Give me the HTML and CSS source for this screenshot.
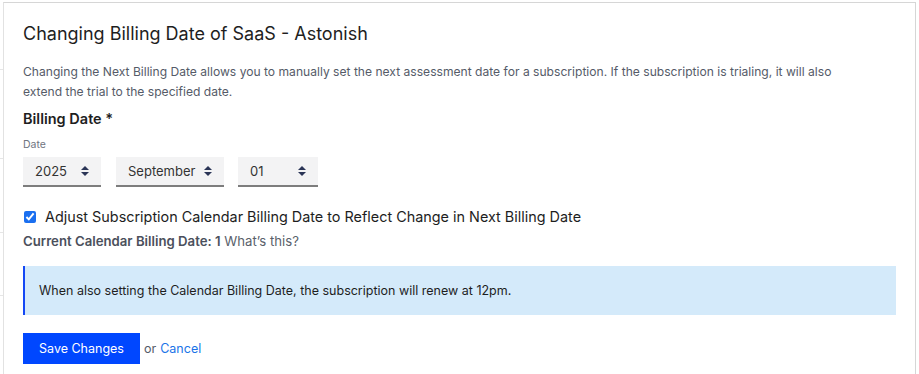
FILE: index.html
```html
<!DOCTYPE html>
<html>

<head>
    <meta charset="UTF-8">
    <title>Changing Billing Date</title>
    <link rel="stylesheet" href="styles.css">
</head>

<body>
    <div class="backdrop">
        <div class="modal">
            <h1 class="modal-title">Changing Billing Date of SaaS - Astonish</h1>

            <p class="modal-description">Changing the Next Billing Date allows you to manually set the next assessment date for a subscription. If the subscription is trialing, it will also extend the trial to the specified date.</p>

            <div class="field-label">Billing Date *</div>
            <div class="field-sublabel">Date</div>

            <div class="date-selects">
                <div class="select select-year">
                    <span>2025</span>
                    <span class="select-arrows"></span>
                </div>
                <div class="select select-month">
                    <span>September</span>
                    <span class="select-arrows"></span>
                </div>
                <div class="select select-day">
                    <span>01</span>
                    <span class="select-arrows"></span>
                </div>
            </div>

            <label class="checkbox-row">
                <input type="checkbox" checked>
                <span>Adjust Subscription Calendar Billing Date to Reflect Change in Next Billing Date</span>
            </label>

            <div class="current-date">
                <strong>Current Calendar Billing Date: 1</strong> What’s this?
            </div>

            <div class="info-box">When also setting the Calendar Billing Date, the subscription will renew at 12pm.</div>

            <div class="actions">
                <button class="primary-button">Save Changes</button>
                <span class="or">or</span>
                <a class="cancel-link" href="#">Cancel</a>
            </div>
        </div>
    </div>
</body>

</html>
```

FILE: styles.css
```css
body {
    margin: 0;
    padding: 0;
    font-family: 'Inter', 'Liberation Sans', sans-serif;
    color: #222;
    background-color: #fff;
    overflow: hidden;
}

.backdrop {
    padding: 2px 3px 0 3px;
    height: 372px;
    overflow: hidden;
    background:
        linear-gradient(#e6e6e6, #e6e6e6) 0 69px / 3px 1px no-repeat,
        linear-gradient(#e6e6e6, #e6e6e6) 0 158px / 3px 1px no-repeat,
        linear-gradient(#e6e6e6, #e6e6e6) 0 232px / 3px 1px no-repeat,
        linear-gradient(#e6e6e6, #e6e6e6) 0 295px / 3px 1px no-repeat,
        #fff;
}

.modal {
    box-sizing: border-box;
    width: 913px;
    height: 400px;
    border: 1px solid #d6d6d6;
    border-left-color: #e2e2e2;
    background-color: #fff;
    padding: 17px 19px 0 19px;
}

.modal-title {
    margin: 0;
    font-size: 18px;
    font-weight: 400;
    line-height: 28px;
    color: #1e1e1e;
}

.modal-description {
    margin: 14px 0 0 0;
    max-width: 830px;
    font-size: 12.1px;
    line-height: 20px;
    color: #555b68;
}

.field-label {
    margin-top: 7px;
    font-size: 14.5px;
    font-weight: 600;
    line-height: 20px;
    color: #1e1e1e;
}

.field-sublabel {
    margin-top: 9px;
    font-size: 10.5px;
    line-height: 14px;
    color: #6f7480;
}

.date-selects {
    display: flex;
    gap: 15px;
    margin-top: 5px;
}

.select {
    box-sizing: border-box;
    display: flex;
    align-items: center;
    justify-content: space-between;
    height: 30px;
    padding: 0 12px;
    background-color: #f3f3f4;
    border-bottom: 2px solid #7d7d7d;
    font-size: 13px;
    color: #333;
}

.select-year {
    width: 78px;
}

.select-month {
    width: 108px;
}

.select-day {
    width: 80px;
    margin-left: -1px;
}

.select-arrows {
    position: relative;
    width: 8px;
    height: 10px;
}

.select-arrows:before,
.select-arrows:after {
    content: "";
    position: absolute;
    left: 0;
    border-left: 4px solid transparent;
    border-right: 4px solid transparent;
}

.select-arrows:before {
    top: 0;
    border-bottom: 4px solid #2a3556;
}

.select-arrows:after {
    bottom: 0;
    border-top: 4px solid #2a3556;
}

.checkbox-row {
    display: flex;
    align-items: center;
    gap: 9px;
    margin-top: 20px;
    font-size: 14.4px;
    line-height: 20px;
    color: #1e1e1e;
}

.checkbox-row input {
    margin: 0 0 0 1px;
    width: 12px;
    height: 12px;
    accent-color: #1a6ff0;
}

.current-date {
    margin-top: 5px;
    font-size: 13.2px;
    line-height: 18px;
    color: #5a5f6b;
}

.current-date strong {
    font-weight: 600;
    color: #4b505c;
}

.info-box {
    margin-top: 16px;
    height: 49px;
    box-sizing: border-box;
    display: flex;
    align-items: center;
    padding-left: 14px;
    background-color: #d4eafa;
    border-left: 2px solid #1448f5;
    font-size: 12.5px;
    color: #1e1e1e;
}

.actions {
    display: flex;
    align-items: center;
    gap: 4px;
    margin-top: 18px;
}

.primary-button {
    height: 31px;
    width: 117px;
    border: none;
    padding: 0;
    background-color: #0047ff;
    color: #fff;
    font-family: inherit;
    font-size: 12.5px;
}

.or {
    font-size: 12.5px;
    color: #555b68;
}

.cancel-link {
    font-size: 12.5px;
    color: #1a73e8;
    text-decoration: none;
}
```
